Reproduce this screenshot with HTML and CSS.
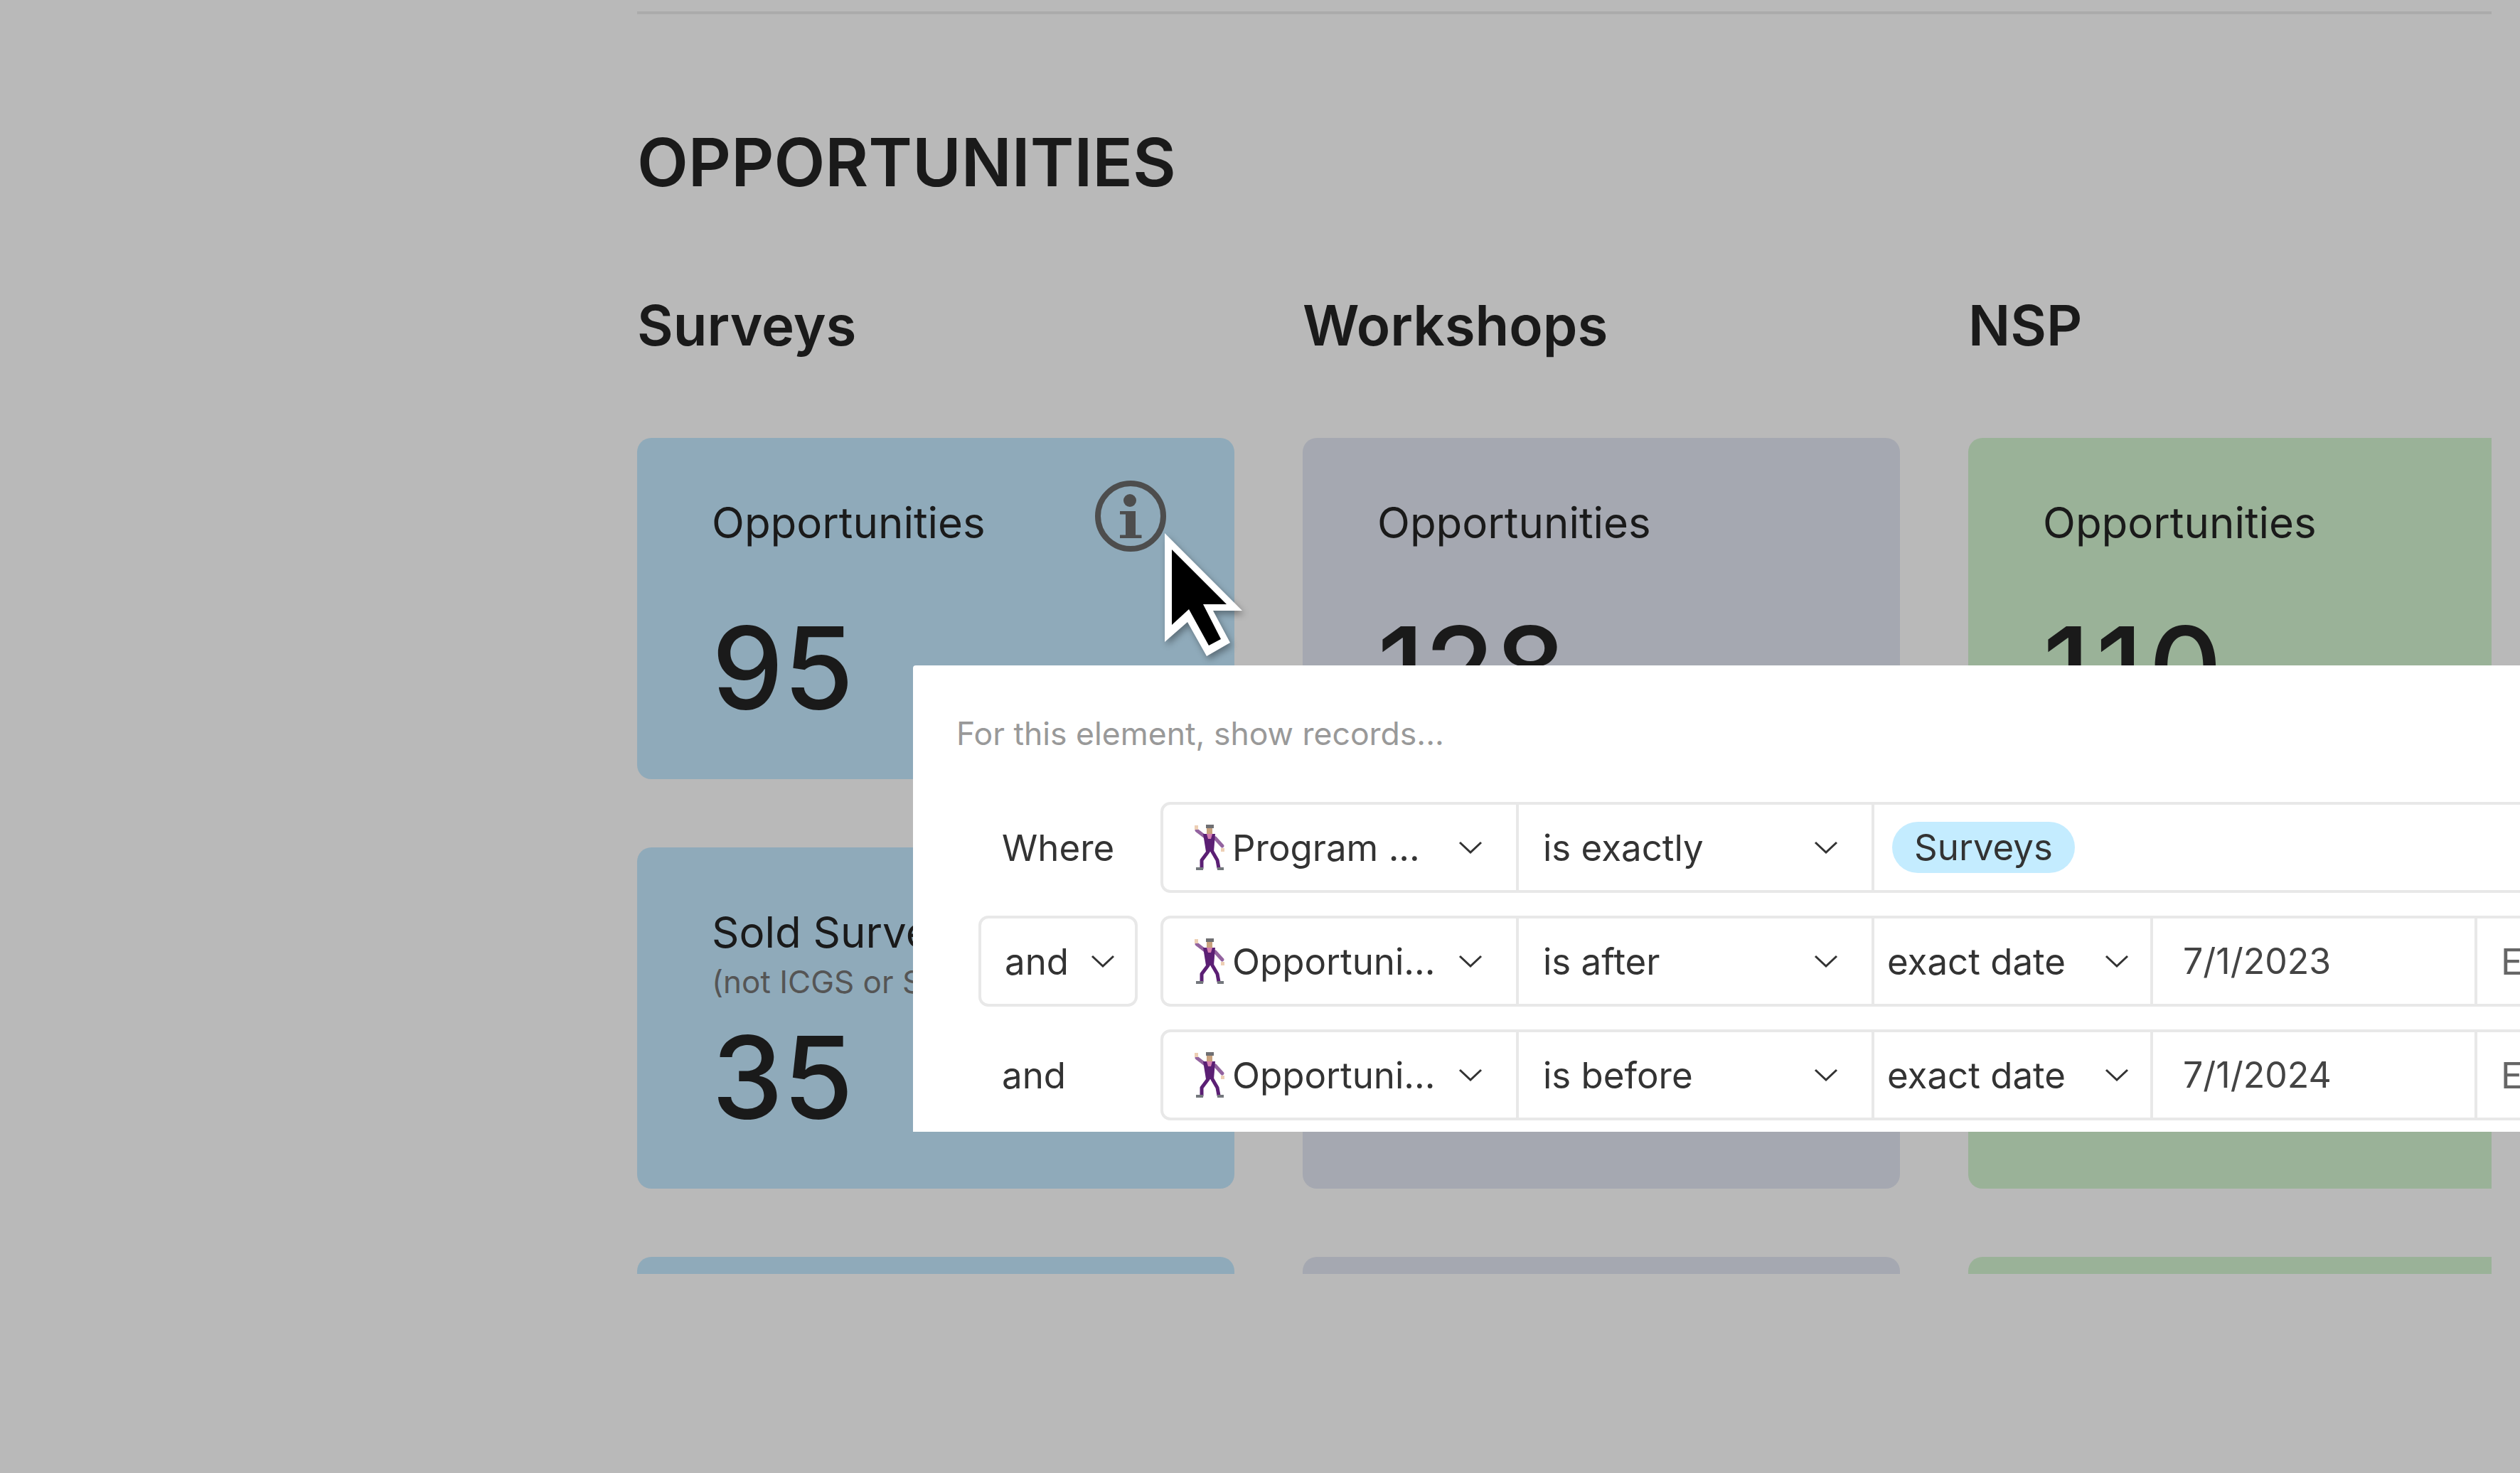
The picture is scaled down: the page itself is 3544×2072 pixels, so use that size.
FILE: index.html
```html
<!DOCTYPE html>
<html lang="en">
<head>
    <meta charset="UTF-8">
    <title>Opportunities</title>
    <link rel="stylesheet" href="styles.css">
</head>
<body>
    <svg class="sprites" width="0" height="0">
        <symbol id="dancer" viewBox="0 0 48 64">
            <g fill="none" stroke-linecap="round" stroke-linejoin="round">
                <path d="M6 8L19 18" stroke="#93639f" stroke-width="5"/>
                <path d="M32 19L42 30" stroke="#93639f" stroke-width="5"/>
                <path d="M22 38L13 50L13 61" stroke="#5b1f74" stroke-width="5"/>
                <path d="M28 38L35 50L37 61" stroke="#5b1f74" stroke-width="5"/>
            </g>
            <rect x="3" y="1" width="5" height="6" fill="#edcfb4"/>
            <rect x="40" y="33" width="5" height="5" fill="#edcfb4"/>
            <rect x="19" y="0" width="11" height="5" fill="#6f6f72"/>
            <rect x="20" y="5" width="8" height="8" fill="#c9a27e"/>
            <path d="M15 13H32L30 38H19Z" fill="#5b1f74"/>
            <path d="M20 13H28L26 20H22Z" fill="#d47fb0"/>
            <rect x="5" y="60" width="10" height="4" fill="#73777c"/>
            <rect x="35" y="60" width="9" height="4" fill="#73777c"/>
        </symbol>
        <symbol id="chevron" viewBox="0 0 34 18">
            <path d="M2 2L17 16L32 2" fill="none" stroke="#333" stroke-width="3"/>
        </symbol>
    </svg>

    <main class="page">
        <div class="rule"></div>
        <h1>OPPORTUNITIES</h1>
        <div class="columns">
            <section>
                <h2>Surveys</h2>
                <div class="card blue">
                    <div class="card-head">
                        <div class="card-label">Opportunities</div>
                    </div>
                    <div class="card-value">95</div>
                    <svg class="info" viewBox="0 0 100 100">
                        <circle cx="50" cy="50" r="46" fill="none" stroke="#4d4d4d" stroke-width="8"/>
                        <circle cx="49" cy="28" r="9" fill="#4d4d4d"/>
                        <path d="M35 43H57V76.5H65.5V81H35V76.5H43V47.5H35Z" fill="#4d4d4d"/>
                    </svg>
                </div>
                <div class="card blue">
                    <div class="card-head">
                        <div class="card-label">Sold Surveys</div>
                        <div class="card-sub">(not ICGS or SPP)</div>
                    </div>
                    <div class="card-value">35</div>
                </div>
                <div class="card blue"></div>
            </section>
            <section>
                <h2>Workshops</h2>
                <div class="card grey">
                    <div class="card-head">
                        <div class="card-label">Opportunities</div>
                    </div>
                    <div class="card-value">128</div>
                </div>
                <div class="card grey"></div>
                <div class="card grey"></div>
            </section>
            <section>
                <h2>NSP</h2>
                <div class="card green">
                    <div class="card-head">
                        <div class="card-label">Opportunities</div>
                    </div>
                    <div class="card-value wide-ones">110</div>
                </div>
                <div class="card green"></div>
                <div class="card green"></div>
            </section>
        </div>
    </main>

    <div class="filter-popover">
        <div class="filter-hint">For this element, show records...</div>
        <div class="filter-row">
            <div class="conj">Where</div>
            <div class="conditions">
                <div class="cell field">
                    <svg class="dancer"><use href="#dancer"/></svg>
                    <span class="cell-text">Program ...</span>
                    <svg class="chevron"><use href="#chevron"/></svg>
                </div>
                <div class="cell operator">
                    <span class="cell-text">is exactly</span>
                    <svg class="chevron"><use href="#chevron"/></svg>
                </div>
                <div class="cell value">
                    <span class="pill">Surveys</span>
                </div>
            </div>
        </div>
        <div class="filter-row">
            <div class="conj conj-select">
                <span>and</span>
                <svg class="chevron"><use href="#chevron"/></svg>
            </div>
            <div class="conditions">
                <div class="cell field">
                    <svg class="dancer"><use href="#dancer"/></svg>
                    <span class="cell-text">Opportuni...</span>
                    <svg class="chevron"><use href="#chevron"/></svg>
                </div>
                <div class="cell operator">
                    <span class="cell-text">is after</span>
                    <svg class="chevron"><use href="#chevron"/></svg>
                </div>
                <div class="cell date-mode">
                    <span class="cell-text">exact date</span>
                    <svg class="chevron"><use href="#chevron"/></svg>
                </div>
                <div class="cell date">7/1/2023</div>
                <div class="cell timezone">Enter</div>
            </div>
        </div>
        <div class="filter-row">
            <div class="conj conj-plain">and</div>
            <div class="conditions">
                <div class="cell field">
                    <svg class="dancer"><use href="#dancer"/></svg>
                    <span class="cell-text">Opportuni...</span>
                    <svg class="chevron"><use href="#chevron"/></svg>
                </div>
                <div class="cell operator">
                    <span class="cell-text">is before</span>
                    <svg class="chevron"><use href="#chevron"/></svg>
                </div>
                <div class="cell date-mode">
                    <span class="cell-text">exact date</span>
                    <svg class="chevron"><use href="#chevron"/></svg>
                </div>
                <div class="cell date">7/1/2024</div>
                <div class="cell timezone">Enter</div>
            </div>
        </div>
    </div>

    <svg class="cursor" viewBox="0 0 110 174">
        <path d="M0 0V153L32 125L59 173L92 154L68 109H109Z" fill="#fff"/>
        <path d="M10 23V129L34 107L62 158L79 149L54 100H87Z" fill="#000"/>
    </svg>
</body>
</html>
```

FILE: styles.css
```css
body {
    margin: 0;
    height: 2072px;
    overflow: hidden;
    position: relative;
    background: #b9b9b9;
    color: #1a1a1a;
    font-family: Inter, "Liberation Sans", sans-serif;
}
.sprites {
    position: absolute;
}
.page {
    box-sizing: border-box;
    width: 2608px;
    height: 1792px;
    margin-left: 896px;
    padding-top: 16px;
    overflow: hidden;
}
.rule {
    height: 4px;
    background: #ababab;
}
h1 {
    margin: 152px 0 0;
    font-size: 93.5px;
    line-height: 112px;
    font-weight: 600;
}
h2 {
    margin: 132px 0 116px;
    font-size: 78px;
    line-height: 84px;
    font-weight: 600;
}
.columns {
    display: grid;
    grid-template-columns: repeat(3, 840px);
    column-gap: 96px;
}
.card {
    box-sizing: border-box;
    height: 480px;
    margin-bottom: 96px;
    padding: 83px 0 0 105px;
    border-radius: 20px;
    position: relative;
}
.blue { background: #8faaba; }
.grey { background: #a5a8b1; }
.green { background: #9ab298; }
.card-head {
    height: 150px;
}
.card-label {
    font-size: 60px;
    line-height: 72px;
}
.card-sub {
    font-size: 44px;
    line-height: 56px;
    color: #555;
    margin-top: 6px;
}
.card-value {
    font-size: 160px;
    line-height: 180px;
    font-weight: 500;
}
.wide-ones {
    letter-spacing: 8px;
}
.info {
    position: absolute;
    left: 644px;
    top: 60px;
    width: 100px;
    height: 100px;
}

.filter-popover {
    position: absolute;
    left: 1284px;
    top: 936px;
    width: 2260px;
    height: 656px;
    background: #fff;
    border-radius: 4px 0 0 0;
    overflow: hidden;
}
.filter-hint {
    padding: 66px 0 66px 61px;
    font-size: 44.5px;
    line-height: 60px;
    color: #999;
}
.filter-row {
    display: flex;
    height: 128px;
    margin-bottom: 32px;
    padding-left: 92px;
    font-size: 51px;
    color: #333;
}
.conj {
    box-sizing: border-box;
    flex: none;
    width: 224px;
    margin-right: 32px;
    padding-left: 33px;
    display: flex;
    align-items: center;
}
.conj-select {
    justify-content: space-between;
    padding-right: 28px;
    border: 4px solid #e8e8e8;
    border-radius: 14px;
}
.conditions {
    display: flex;
    flex: none;
    width: 2000px;
    box-sizing: border-box;
    border: 4px solid #e8e8e8;
    border-radius: 14px;
}
.cell {
    box-sizing: border-box;
    flex: none;
    display: flex;
    align-items: center;
    border-right: 4px solid #e8e8e8;
}
.field {
    width: 500px;
    padding-left: 41px;
}
.operator {
    width: 500px;
    padding-left: 34px;
}
.date-mode {
    width: 392px;
    padding-left: 18px;
}
.date {
    width: 456px;
    padding-left: 42px;
    color: #444;
    font-size: 50px;
}
.value {
    flex: 1;
    padding-left: 25px;
    border-right: 0;
}
.timezone {
    padding-left: 33px;
    border-right: 0;
    color: #666;
}
.cell-text {
    flex: 1;
    white-space: nowrap;
}
.dancer {
    flex: none;
    width: 48px;
    height: 64px;
    margin-right: 8px;
}
.chevron {
    flex: none;
    width: 34px;
    height: 18px;
    margin-right: 47px;
}
.conj-select .chevron {
    margin-right: 0;
}
.date-mode .chevron {
    margin-right: 30px;
}
.pill {
    box-sizing: border-box;
    height: 72px;
    padding: 0 31px;
    border-radius: 36px;
    background: #c4ecff;
    line-height: 72px;
}
.cursor {
    position: absolute;
    left: 1638px;
    top: 750px;
    width: 110px;
    height: 174px;
    filter: drop-shadow(3px 5px 5px rgba(0, 0, 0, 0.35));
}
```
